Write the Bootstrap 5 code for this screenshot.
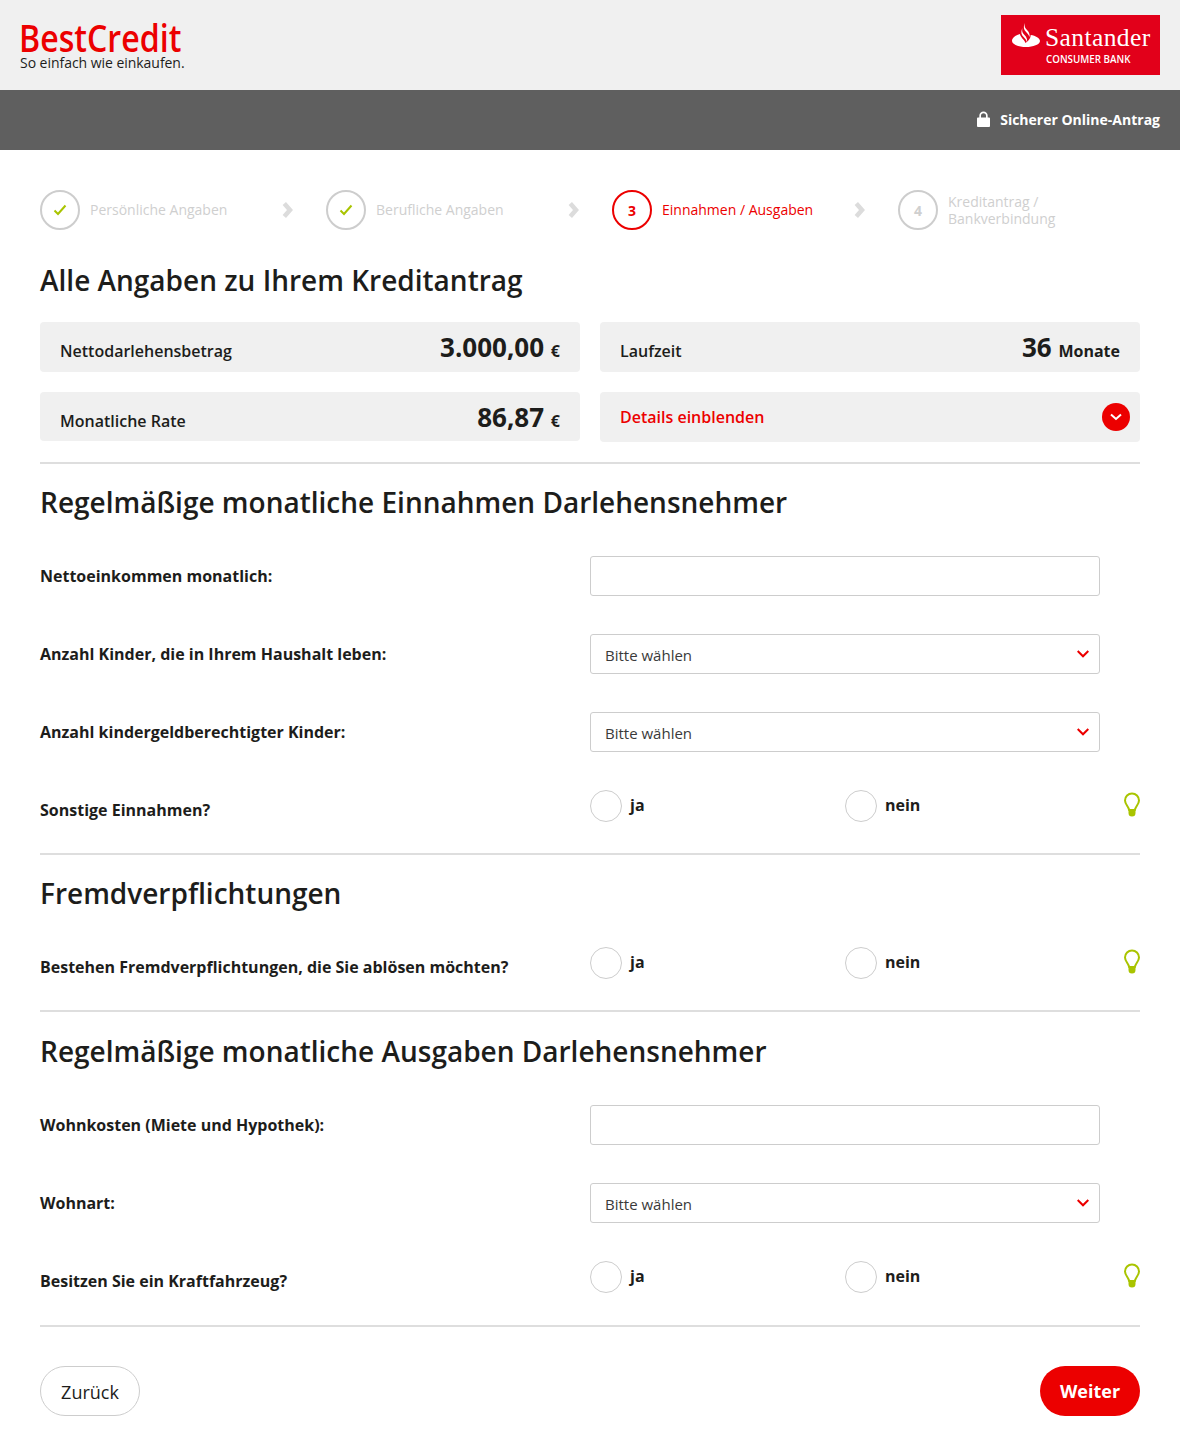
<!DOCTYPE html>
<html lang="de">
<head>
  <meta charset="UTF-8">
  <meta name="viewport" content="width=device-width, initial-scale=1.0">
  <title>Kreditantrag</title>
  <link href="https://cdn.jsdelivr.net/npm/bootstrap@5.3.0/dist/css/bootstrap.min.css" rel="stylesheet">
  <style>
    body {
      font-family: "Open Sans", sans-serif;
      color: #1d1d1b;
      font-size: 16px;
      background: #fff;
    }
    .top-head {
      height: 90px;
      background: #f0f0f0;
      padding: 15px 20px;
    }
    .brand-name {
      font-size: 38px;
      font-weight: 600;
      line-height: 33px;
      color: #ec0000;
      margin: 6px 0 1px -1px;
      transform: scaleX(.845);
      transform-origin: left center;
    }
    .brand-claim {
      font-size: 14px;
      line-height: 16px;
      letter-spacing: -.04px;
    }
    .santander-box {
      width: 159px;
      height: 60px;
      background: #e2001a;
      color: #fff;
    }
    .santander-top {
      padding: 8px 0 0 11px;
    }
    .santander-flame {
      margin-right: 5px;
    }
    .santander-name {
      font-family: "Liberation Serif", serif;
      font-size: 25.5px;
      line-height: 26px;
      letter-spacing: .4px;
      margin-top: 2px;
    }
    .santander-sub {
      font-size: 9.8px;
      line-height: 12px;
      font-weight: 600;
      margin: 3px 0 0 45px;
    }
    .secure-bar {
      height: 60px;
      background: #5f5f5f;
      color: #fff;
      font-size: 14px;
      font-weight: 700;
      padding: 0 20px 2px 0;
    }
    .secure-lock {
      margin-right: 10px;
    }
    .page-main {
      padding: 40px 40px 40px;
    }
    .step-item {
      position: relative;
      width: 286px;
      height: 40px;
      font-size: 14px;
      line-height: 17px;
      color: #cfcfcf;
    }
    .step-last { width: auto; }
    .step-text { margin-bottom: 2px; }
    .step-last .step-text { margin-bottom: 0; }
    .step-circle {
      width: 40px;
      height: 40px;
      flex: none;
      border: 2px solid #cdcdcd;
      border-radius: 50%;
      margin-right: 10px;
      font-weight: 700;
    }
    .step-now { color: #ec0000; }
    .step-now .step-circle { border-color: #ec0000; }
    .step-arrow { position: absolute; left: 242px; top: 12px; }
    .main-title {
      font-size: 28px;
      line-height: 38px;
      font-weight: 600;
      margin: 31px 0 23px;
    }
    .sum-box {
      background: #f0f0f0;
      border-radius: 4px;
      padding: 0 20px;
      height: 50px;
      width: 540px;
    }
    .sum-short { height: 49px; }
    .sum-label {
      font-size: 16px;
      font-weight: 600;
      line-height: 20px;
      padding-top: 19px;
    }
    .sum-value {
      font-size: 26px;
      line-height: 36px;
      font-weight: 700;
      padding-top: 7px;
    }
    .sum-unit {
      font-size: 16px;
      font-weight: 700;
    }
    .sum-grid {
      display: grid;
      grid-template-columns: 540px 540px;
      column-gap: 20px;
      row-gap: 20px;
    }
    .details-link {
      color: #ec0000;
      font-size: 16px;
      font-weight: 600;
      padding: 0 10px 0 20px;
    }
    .details-dot {
      width: 28px;
      height: 28px;
      border-radius: 50%;
      background: #ec0000;
    }
    .sep-line {
      height: 2px;
      background: #dedede;
      margin: 31px 0 0;
      border: 0;
      opacity: 1;
    }
    .sep-sum { margin-top: 20px; }
    .sep-last { margin: 32px 0 39px; }
    .sec-title {
      font-size: 28px;
      line-height: 38px;
      font-weight: 600;
      margin: 19px 0 35px;
    }
    .sec-third { margin-top: 20px; }
    .field-row {
      display: flex;
      width: 1100px;
      height: 40px;
      margin-bottom: 38px;
    }
    .field-label {
      width: 550px;
      flex: none;
      font-size: 16px;
      font-weight: 700;
      line-height: 40px;
    }
    .field-input.form-control, .field-input.form-select {
      width: 510px;
      height: 40px;
      border: 1px solid #cdcdcd;
      border-radius: 3px;
      font-size: 15px;
      color: #3a3a3a;
      padding: 2px 14px 0;
      box-shadow: none;
    }
    .field-input.form-select {
      background-image: url("data:image/svg+xml,%3csvg xmlns='http://www.w3.org/2000/svg' viewBox='0 0 12 8'%3e%3cpath fill='none' stroke='%23ec0000' stroke-width='2' d='M.7 1l5.300 5.300 5.300-5.300'/%3e%3c/svg%3e");
      background-position: right 10px center;
      background-size: 12px 8px;
    }
    .radio-pick {
      width: 255px;
      flex: none;
      font-weight: 700;
      font-size: 16px;
      line-height: 22px;
    }
    .radio-text { margin-bottom: 2px; }
    .radio-dot {
      width: 32px;
      height: 32px;
      border: 1px solid #cdcdcd;
      border-radius: 50%;
      margin-right: 8px;
      flex: none;
      background: #fff;
    }
    .radio-row {
      display: flex;
      width: 1100px;
      height: 32px;
    }
    .radio-row .field-label { line-height: 22px; padding-top: 9px; }
    .hint-bulb { margin: 2px -1px 0 auto; }
    .btn-back.btn {
      width: 100px;
      height: 50px;
      border: 1px solid #cdcdcd;
      border-radius: 25px;
      background: #fff;
      color: #1d1d1b;
      font-size: 18px;
      padding: 2px 0 0;
    }
    .btn-next.btn {
      width: 100px;
      height: 50px;
      border: 0;
      border-radius: 25px;
      background: #ec0000;
      color: #fff;
      font-size: 18px;
      font-weight: 700;
      padding: 0;
    }
  </style>
</head>
<body>
  <div class="top-head d-flex justify-content-between">
    <div>
      <div class="brand-name">BestCredit</div>
      <div class="brand-claim">So einfach wie einkaufen.</div>
    </div>
    <div class="santander-box">
      <div class="santander-top d-flex align-items-start">
        <svg class="santander-flame" width="28" height="24" viewBox="0 0 28 24" aria-hidden="true">
          <path fill="#fff" d="M0 18C0 14.500 4 12 8 11c0 3 4 5 5.500 9 2.500-2 5-4 5.200-8C23.500 12.800 28 15 28 18c0 3.500-7 6-14 6S0 21.500 0 18z"/>
          <path fill="#fff" d="M13 0c-1 3 0 5 2 7s3 4 2.500 7c-1-3-3-4.500-4.700-6.500C11.300 5.500 11.800 2 13 0z"/>
          <path fill="#fff" d="M10.500 5c-1 3 0 5 2 7s3 4 2.500 7c-1-3-3-4.500-4.700-6.500C8.800 10.500 9.300 7 10.500 5z"/>
        </svg>
        <span class="santander-name">Santander</span>
      </div>
      <div class="santander-sub">CONSUMER BANK</div>
    </div>
  </div>

  <div class="secure-bar d-flex align-items-center justify-content-end">
    <svg class="secure-lock" width="13" height="16" viewBox="0 0 14 17" aria-hidden="true">
      <path fill="#fff" d="M1 7h1.500V5a4.500 4.500 0 0 1 9 0v2H13a1 1 0 0 1 1 1v8a1 1 0 0 1-1 1H1a1 1 0 0 1-1-1V8a1 1 0 0 1 1-1zm3.300 0h5.400V5a2.700 2.700 0 0 0-5.400 0z"/>
    </svg>
    Sicherer Online-Antrag
  </div>

  <div class="page-main">
    <div class="d-flex">
      <div class="step-item d-flex align-items-center">
        <div class="step-circle d-flex align-items-center justify-content-center">
          <svg width="14" height="12" viewBox="0 0 14 12"><path fill="none" stroke="#a9c400" stroke-width="2" d="M1.500 6.500l3.500 3.500 7.500-8.500"/></svg>
        </div>
        <span class="step-text">Persönliche Angaben</span>
        <svg class="step-arrow" width="11" height="16" viewBox="0 0 11 16"><path fill="none" stroke="#dcdcdc" stroke-width="4.500" d="M2.300 1.500L8 8l-5.700 6.500"/></svg>
      </div>
      <div class="step-item d-flex align-items-center">
        <div class="step-circle d-flex align-items-center justify-content-center">
          <svg width="14" height="12" viewBox="0 0 14 12"><path fill="none" stroke="#a9c400" stroke-width="2" d="M1.500 6.500l3.500 3.500 7.500-8.500"/></svg>
        </div>
        <span class="step-text">Berufliche Angaben</span>
        <svg class="step-arrow" width="11" height="16" viewBox="0 0 11 16"><path fill="none" stroke="#dcdcdc" stroke-width="4.500" d="M2.300 1.500L8 8l-5.700 6.500"/></svg>
      </div>
      <div class="step-item step-now d-flex align-items-center">
        <div class="step-circle d-flex align-items-center justify-content-center">3</div>
        <span class="step-text">Einnahmen / Ausgaben</span>
        <svg class="step-arrow" width="11" height="16" viewBox="0 0 11 16"><path fill="none" stroke="#dcdcdc" stroke-width="4.500" d="M2.300 1.500L8 8l-5.700 6.500"/></svg>
      </div>
      <div class="step-item step-last d-flex align-items-center">
        <div class="step-circle d-flex align-items-center justify-content-center">4</div>
        <span class="step-text">Kreditantrag /<br>Bankverbindung</span>
      </div>
    </div>

    <h1 class="main-title">Alle Angaben zu Ihrem Kreditantrag</h1>

    <div class="sum-grid">
      <div class="sum-box d-flex justify-content-between">
        <span class="sum-label">Nettodarlehensbetrag</span>
        <span class="sum-value">3.000,00 <span class="sum-unit">€</span></span>
      </div>
      <div class="sum-box d-flex justify-content-between">
        <span class="sum-label">Laufzeit</span>
        <span class="sum-value">36 <span class="sum-unit">Monate</span></span>
      </div>
      <div class="sum-box sum-short d-flex justify-content-between">
        <span class="sum-label">Monatliche Rate</span>
        <span class="sum-value">86,87 <span class="sum-unit">€</span></span>
      </div>
      <div class="sum-box details-link d-flex justify-content-between align-items-center">
        Details einblenden
        <span class="details-dot d-flex align-items-center justify-content-center">
          <svg width="12" height="8" viewBox="0 0 12 8"><path fill="none" stroke="#fff" stroke-width="2" d="M1 1.500l5 4.500 5-4.500"/></svg>
        </span>
      </div>
    </div>

    <hr class="sep-line sep-sum">
    <h2 class="sec-title">Regelmäßige monatliche Einnahmen Darlehensnehmer</h2>

    <div class="field-row">
      <label class="field-label">Nettoeinkommen monatlich:</label>
      <input class="form-control field-input" type="text">
    </div>
    <div class="field-row">
      <label class="field-label">Anzahl Kinder, die in Ihrem Haushalt leben:</label>
      <select class="form-select field-input"><option>Bitte wählen</option></select>
    </div>
    <div class="field-row">
      <label class="field-label">Anzahl kindergeldberechtigter Kinder:</label>
      <select class="form-select field-input"><option>Bitte wählen</option></select>
    </div>
    <div class="radio-row">
      <div class="field-label">Sonstige Einnahmen?</div>
      <div class="radio-pick d-flex align-items-center"><span class="radio-dot"></span><span class="radio-text">ja</span></div>
      <div class="radio-pick d-flex align-items-center"><span class="radio-dot"></span><span class="radio-text">nein</span></div>
      <svg class="hint-bulb" width="18" height="25" viewBox="0 0 18 25" aria-hidden="true">
        <path fill="none" stroke="#a9c400" stroke-width="2" d="M9 1.500a7 7 0 0 0-7 7c0 3.600 3.500 6 4.200 9.500h5.600c.7-3.500 4.200-5.900 4.200-9.500a7 7 0 0 0-7-7z"/>
        <path fill="#a9c400" d="M5.500 17.500h7V21a3.500 3.500 0 0 1-7 0z"/>
      </svg>
    </div>

    <hr class="sep-line">
    <h2 class="sec-title">Fremdverpflichtungen</h2>

    <div class="radio-row">
      <div class="field-label">Bestehen Fremdverpflichtungen, die Sie ablösen möchten?</div>
      <div class="radio-pick d-flex align-items-center"><span class="radio-dot"></span><span class="radio-text">ja</span></div>
      <div class="radio-pick d-flex align-items-center"><span class="radio-dot"></span><span class="radio-text">nein</span></div>
      <svg class="hint-bulb" width="18" height="25" viewBox="0 0 18 25" aria-hidden="true">
        <path fill="none" stroke="#a9c400" stroke-width="2" d="M9 1.500a7 7 0 0 0-7 7c0 3.600 3.500 6 4.200 9.500h5.600c.7-3.500 4.200-5.900 4.200-9.500a7 7 0 0 0-7-7z"/>
        <path fill="#a9c400" d="M5.500 17.500h7V21a3.500 3.500 0 0 1-7 0z"/>
      </svg>
    </div>

    <hr class="sep-line">
    <h2 class="sec-title sec-third">Regelmäßige monatliche Ausgaben Darlehensnehmer</h2>

    <div class="field-row">
      <label class="field-label">Wohnkosten (Miete und Hypothek):</label>
      <input class="form-control field-input" type="text">
    </div>
    <div class="field-row">
      <label class="field-label">Wohnart:</label>
      <select class="form-select field-input"><option>Bitte wählen</option></select>
    </div>
    <div class="radio-row">
      <div class="field-label">Besitzen Sie ein Kraftfahrzeug?</div>
      <div class="radio-pick d-flex align-items-center"><span class="radio-dot"></span><span class="radio-text">ja</span></div>
      <div class="radio-pick d-flex align-items-center"><span class="radio-dot"></span><span class="radio-text">nein</span></div>
      <svg class="hint-bulb" width="18" height="25" viewBox="0 0 18 25" aria-hidden="true">
        <path fill="none" stroke="#a9c400" stroke-width="2" d="M9 1.500a7 7 0 0 0-7 7c0 3.600 3.500 6 4.200 9.500h5.600c.7-3.500 4.200-5.900 4.200-9.500a7 7 0 0 0-7-7z"/>
        <path fill="#a9c400" d="M5.500 17.500h7V21a3.500 3.500 0 0 1-7 0z"/>
      </svg>
    </div>

    <hr class="sep-line sep-last">

    <div class="d-flex justify-content-between">
      <button type="button" class="btn btn-back">Zurück</button>
      <button type="button" class="btn btn-next">Weiter</button>
    </div>
  </div>

  <script src="https://cdn.jsdelivr.net/npm/bootstrap@5.3.0/dist/js/bootstrap.bundle.min.js"></script>
</body>
</html>
